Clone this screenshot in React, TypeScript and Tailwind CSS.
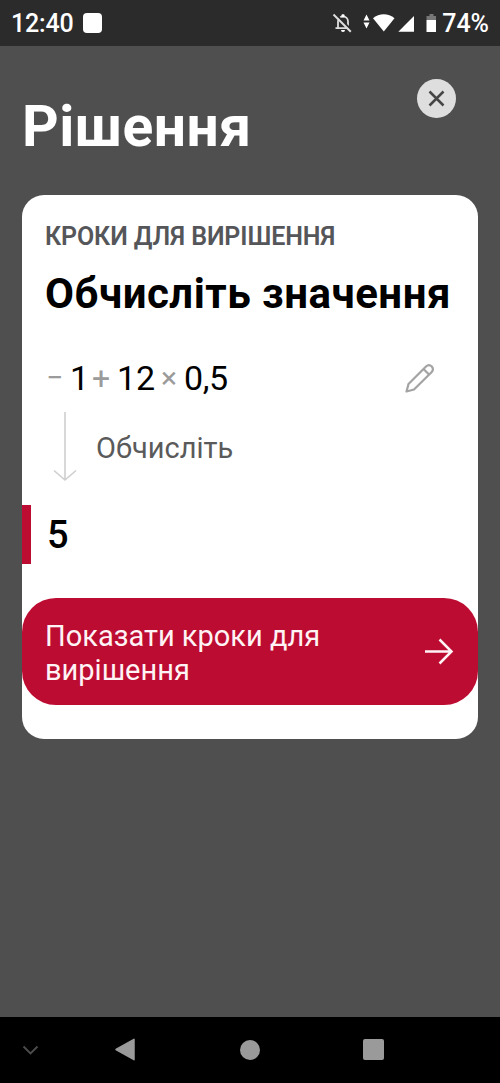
function StatusBar() {
  return (
    <div className="flex h-[46px] shrink-0 items-center bg-[#2b2b2b] pl-[11px] pr-[11px] pt-0.5 text-[25px] font-medium leading-7 text-white">
      <span className="w-[62px] whitespace-nowrap tracking-[-0.2px]">12:40</span>
      <span className="mb-0.5 ml-[10px] h-5 w-[19px] rounded-[4px] bg-white" />
      <svg className="mb-0.5 ml-auto shrink-0" width="106" height="24" viewBox="332 11 106 24" fill="#fff">
        <g fill="none" stroke="#dedede" strokeWidth="1.8">
          <path d="M338 28V21.500a5 5 0 0 1 10 0V28M335.500 28.200H350" />
          <path d="M334.500 13L352 30.500" stroke="#2b2b2b" strokeWidth="2" />
          <path d="M333.500 14.500L350.800 31.800" strokeWidth="2" />
        </g>
        <rect x="341.500" y="14.200" width="3" height="3" rx="1" />
        <path d="M341 30h4a2 2 0 0 1-4 0z" />
        <path d="M363.500 20.500l3-6 3 6zM363.500 22.500h6l-3 6z" />
        <path d="M373 18.200c6-5.200 15.500-5.200 21.500 0L383.800 31.500z" />
        <path d="M398.300 31.800L414 16v15.800z" />
        <path d="M429.500 14h4v2h2.500v4h-9.500v-4h3z" fill="#777" />
        <path d="M426.500 20h9.500v12h-9.500z" />
      </svg>
      <span className="ml-[4px] whitespace-nowrap">74%</span>
    </div>
  );
}

function NavBar() {
  return (
    <div className="flex h-[66px] shrink-0 items-center bg-black">
      <svg className="ml-[22px]" width="17" height="11" viewBox="0 0 17 11" fill="none">
        <path d="M1.500 1.500l7 7 7-7" stroke="#4c4c4c" strokeWidth="1.800" />
      </svg>
      <svg className="ml-[76px]" width="20" height="24" viewBox="0 0 20 24">
        <path d="M1 11.500L19 1.300v20.400z" fill="#9a9a9a" stroke="#9a9a9a" strokeWidth="1.500" strokeLinejoin="round" />
      </svg>
      <span className="ml-[105px] size-5 rounded-full bg-[#9a9a9a]" />
      <span className="mb-px ml-[103px] size-[21px] rounded-[2px] bg-[#9a9a9a]" />
    </div>
  );
}

export default function App() {
  return (
    <main className="flex h-[1083px] w-[500px] flex-col overflow-hidden bg-[#4f4f4f] font-['Roboto',sans-serif]">
      <StatusBar />

      <header className="flex h-[149px] shrink-0 items-start justify-between pl-[22px] pr-[44px]">
        <h1 className="mt-[51px] whitespace-nowrap text-[57px] font-bold leading-[60px] tracking-[0.5px] text-white">
          Рішення
        </h1>
        <button className="mt-[33px] flex size-[39px] items-center justify-center rounded-full bg-[#dedede]">
          <svg width="17" height="17" viewBox="0 0 17 17" stroke="#464646" strokeWidth="2.500">
            <path d="M1.500 1.500l14 14M15.500 1.500l-14 14" />
          </svg>
        </button>
      </header>

      <section className="mx-[22px] flex h-[544px] shrink-0 flex-col rounded-[22px] bg-white">
        <p className="ml-[23px] mt-[28px] whitespace-nowrap text-[25px] font-semibold leading-7 tracking-[-0.1px] text-[#555659]">
          КРОКИ ДЛЯ ВИРІШЕННЯ
        </p>
        <h2 className="ml-[23px] mt-[19px] whitespace-nowrap text-[42px] font-bold leading-[48px] tracking-[0.5px] text-black">
          Обчисліть значення
        </h2>

        <div className="mt-[40px] flex h-10 items-center pl-[24px] pr-[43px] text-[34px] leading-10 text-black">
          <span className="w-[24px] text-[30px] text-[#9b9b9b]">−</span>
          <span className="w-[22px]">1</span>
          <span className="w-[25px] text-[32px] text-[#9b9b9b]">+</span>
          <span className="w-[44px]">12</span>
          <span className="w-[23px] text-[30px] text-[#9b9b9b]">×</span>
          <span className="tracking-[-0.4px]">0,5</span>
          <svg className="ml-auto" width="31" height="31" viewBox="0 0 31 31" fill="none" stroke="#a3a3a3" strokeWidth="2.200" strokeLinejoin="round">
            <path d="M2.500 28.500L4.500 21L22 3.500Q25 0.800 27.800 3.500Q30.200 6.500 27.500 9.200L10 26.500zM19.500 6l5.500 5.500" />
          </svg>
        </div>

        <div className="mt-[14px] flex h-[70px] items-center pl-[31px]">
          <svg width="25" height="70" viewBox="0 0 25 70" fill="none" stroke="#cfcfcf" strokeWidth="1.600">
            <path d="M12 0v68M1 58.500L12 68l11-9.500" />
          </svg>
          <span className="ml-[18px] pt-0.5 text-[29px] leading-9 text-[#5a5a5a]">Обчисліть</span>
        </div>

        <div className="mt-[23px] flex h-[59px] items-center border-l-[9px] border-[#bd0c32] pl-4">
          <span className="text-[38px] font-medium leading-[60px] text-black">5</span>
        </div>

        <button className="mt-[34px] flex h-[107px] items-center justify-between rounded-[34px] bg-[#bd0c32] pl-[23px] pr-6 text-left text-[29px] leading-[34px] text-[#fff3f5]">
          <span className="w-[320px] pt-0.5">
            Показати кроки для
            <br />
            вирішення
          </span>
          <svg width="30" height="27" viewBox="0 0 30 27" fill="none" stroke="#fff3f5" strokeWidth="2.500">
            <path d="M1 13.500h26M15.500 1.500l12 12-12 12" />
          </svg>
        </button>
      </section>

      <div className="flex-1" />
      <NavBar />
    </main>
  );
}
